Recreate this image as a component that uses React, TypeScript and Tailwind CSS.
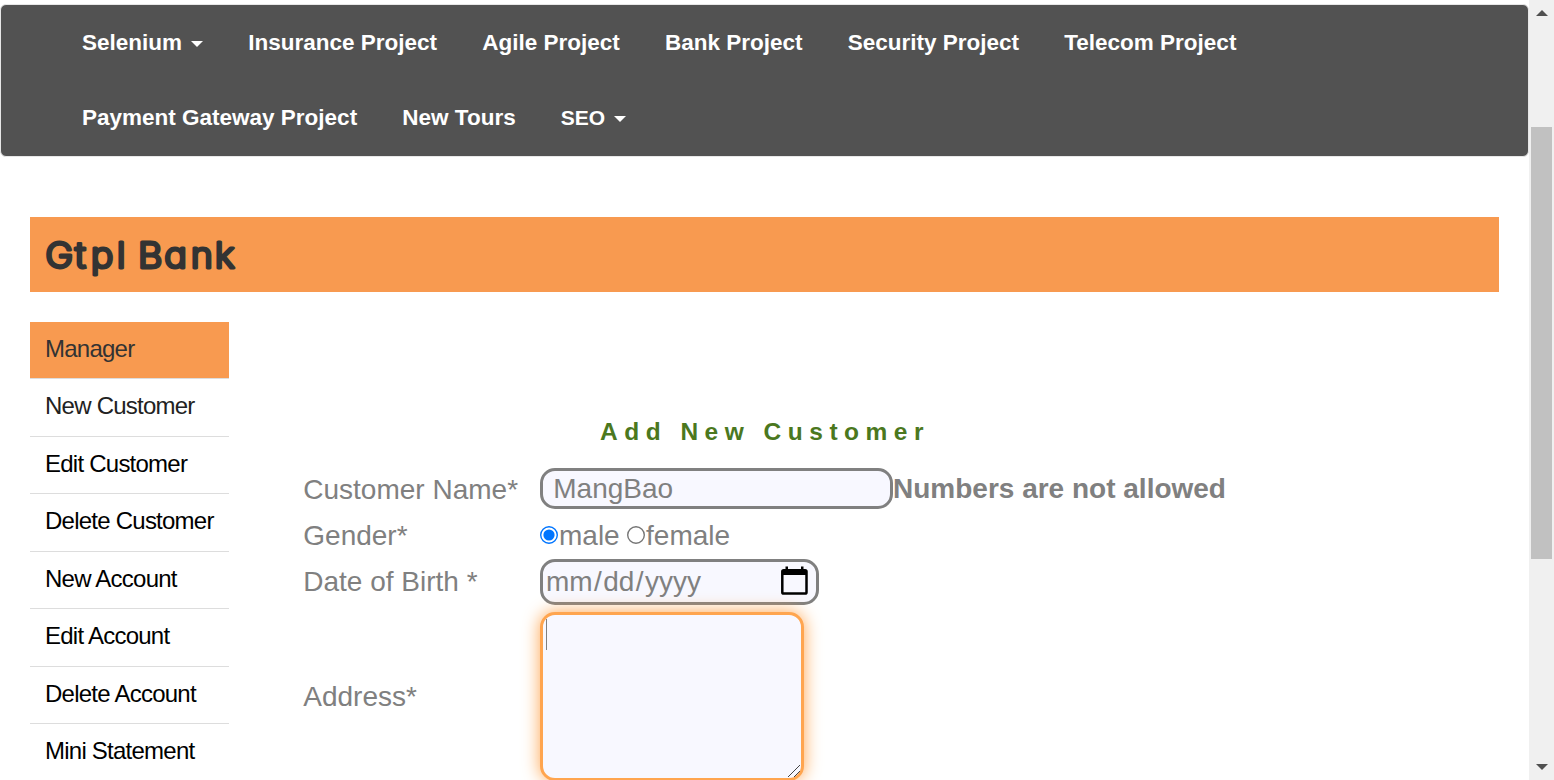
import React from 'react';

const topLinks = [
  { label: 'Selenium', menu: true },
  { label: 'Insurance Project' },
  { label: 'Agile Project' },
  { label: 'Bank Project' },
  { label: 'Security Project' },
  { label: 'Telecom Project' },
];

const sideLinks = [
  'New Customer',
  'Edit Customer',
  'Delete Customer',
  'New Account',
  'Edit Account',
  'Delete Account',
  'Mini Statement',
];

function Caret() {
  return (
    <svg width="12" height="6" viewBox="0 0 12 6" className="ml-[9px] mt-[2px]">
      <path d="M0 0H12L6 6Z" fill="currentColor" />
    </svg>
  );
}

function NavBar() {
  return (
    <nav className="mt-[4px] h-[153px] w-[1529px] rounded-[6px] border border-[#e7e7e7] bg-[#525252] pl-[81px] text-[22.5px] font-bold text-white">
      <ul className="flex h-[75px] items-center gap-[45.2px]">
        {topLinks.map((l) => (
          <li key={l.label} className="flex items-center whitespace-nowrap">
            {l.label}
            {l.menu && <Caret />}
          </li>
        ))}
      </ul>
      <ul className="flex h-[75px] items-center gap-[45.2px]">
        <li>Payment Gateway Project</li>
        <li>New Tours</li>
        <li className="flex items-center pt-[1px] text-[21px]">
          SEO
          <Caret />
        </li>
      </ul>
    </nav>
  );
}

function BankTitle() {
  return (
    <h1 className="ml-[30px] mt-[60px] h-[75px] w-[1469px] bg-[#f89a50]">
      <svg width="230" height="75" className="block">
        <text
          x="14.4 42.3 57.4 81.8 93 102 126.6 151.6 174.4"
          y="51.3"
          transform="scale(1.06 1)"
          className="font-['Inter',sans-serif] text-[35.5px] font-light [font-feature-settings:'cv11']"
          fill="#333"
          stroke="#333"
          strokeWidth="2.9"
          strokeLinejoin="round"
        >
          Gtpl Bank
        </text>
      </svg>
    </h1>
  );
}

function SideMenu() {
  return (
    <ul className="w-[199px] shrink-0 text-[24px] leading-[54px] tracking-[-0.76px] text-black">
      <li className="h-[57px] border-b border-[#ddd] bg-[#f89a50] pl-[15px] text-[#333]">Manager</li>
      {sideLinks.map((l) => (
        <li
          key={l}
          className="whitespace-nowrap border-b border-[#ddd] pl-[15px] odd:h-[57px] even:h-[58px] nth-[2]:text-[#222]"
        >
          {l}
        </li>
      ))}
    </ul>
  );
}

function Radio({ checked = false }: { checked?: boolean }) {
  return (
    <svg width="18" height="18" viewBox="0 0 18 18" className="block shrink-0">
      <circle cx="9" cy="9" r="8.3" fill="#fff" stroke={checked ? '#0075ff' : '#767676'} strokeWidth="1.4" />
      {checked && <circle cx="9" cy="9" r="5.6" fill="#0075ff" />}
    </svg>
  );
}

function CalendarIcon() {
  return (
    <svg width="28" height="30" viewBox="0 0 28 30" className="-mt-[2px] block">
      <rect x="4.5" y="0.5" width="2.5" height="4" fill="#000" />
      <rect x="20" y="0.5" width="2.5" height="4" fill="#000" />
      <rect x="1.3" y="4.2" width="24.2" height="23.4" rx="1.4" fill="none" stroke="#000" strokeWidth="2.5" />
      <path d="M1 4H26V9H1Z" fill="#000" />
    </svg>
  );
}

function CustomerForm() {
  return (
    <section className="ml-[74px] mt-[92px] w-[1000px] text-[28px] leading-[32px] text-[#808080]">
      <h2 className="pl-[297px] pt-px text-[24.5px] font-bold leading-[34px] tracking-[6.5px] text-[#4b781e]">
        Add New Customer
      </h2>
      <div className="mt-[19px] grid grid-cols-[237px_1fr]">
        <div className="flex h-[41px] items-center pl-[0.3px] pt-[2px]">Customer Name*</div>
        <div className="flex h-[41px] items-center">
          <div className="flex h-[41px] w-[353px] items-center rounded-[15px] border-3 border-[#808080] bg-[#f8f8ff] pl-[10.3px]">
            MangBao
          </div>
          <span className="whitespace-nowrap font-bold">Numbers are not allowed</span>
        </div>

        <div className="flex h-[50px] items-center pl-[0.3px] pt-[4px]">Gender*</div>
        <div className="flex h-[50px] items-center pt-[2px]">
          <Radio checked />
          <span className="ml-px pt-[2px]">male</span>
          <span className="w-[7.4px]" />
          <Radio />
          <span className="ml-px pt-[2px]">female</span>
        </div>

        <div className="flex h-[46px] items-center pl-[0.3px]">Date of Birth *</div>
        <div className="flex h-[46px] w-[279px] items-center justify-between rounded-[15px] border-3 border-[#808080] bg-[#f8f8ff] pl-[3px] pr-[7px]">
          <span>
            mm<span className="px-[1.4px]">/</span>dd<span className="px-[1.4px]">/</span>yyyy
          </span>
          <CalendarIcon />
        </div>

        <div className="mt-[7px] flex h-[169px] items-center pl-[0.3px]">Address*</div>
        <div className="relative mt-[7px] h-[169px] w-[264px] rounded-[15px] border-3 border-[#ffa54f] bg-[#f8f8ff] pl-[3px] pt-[4px] shadow-[0_0_17px_#ffa54f]">
          <div className="h-[31px] w-px bg-[#808080]" />
          <svg width="12" height="12" viewBox="0 0 12 12" className="absolute bottom-[1px] right-[1px]">
            <path d="M0 12L12 0M6 12L12 6" stroke="#444" strokeWidth="1" />
          </svg>
        </div>
      </div>
    </section>
  );
}

function ScrollBar() {
  return (
    <div className="flex h-full w-[25px] shrink-0 flex-col items-center bg-[#f0f0f0] text-[#505050]">
      <svg width="12" height="6" viewBox="0 0 12 6" className="mt-[10px] shrink-0">
        <path d="M0 6H12L6 0Z" fill="currentColor" />
      </svg>
      <div className="mt-[111px] h-[432px] w-[21px] shrink-0 bg-[#c1c1c1]" />
      <svg width="12" height="6" viewBox="0 0 12 6" className="mt-[205px] shrink-0">
        <path d="M0 0H12L6 6Z" fill="currentColor" />
      </svg>
    </div>
  );
}

export default function App() {
  return (
    <div className="flex h-[780px] w-[1554px] overflow-hidden bg-white font-['Liberation_Sans',Arial,sans-serif]">
      <main className="h-full w-[1529px] shrink-0 overflow-hidden">
        <div className="flex flex-col">
          <NavBar />
          <BankTitle />
          <div className="mt-[30px] flex items-start">
            <div className="w-[30px] shrink-0" />
            <SideMenu />
            <CustomerForm />
          </div>
        </div>
      </main>
      <ScrollBar />
    </div>
  );
}
